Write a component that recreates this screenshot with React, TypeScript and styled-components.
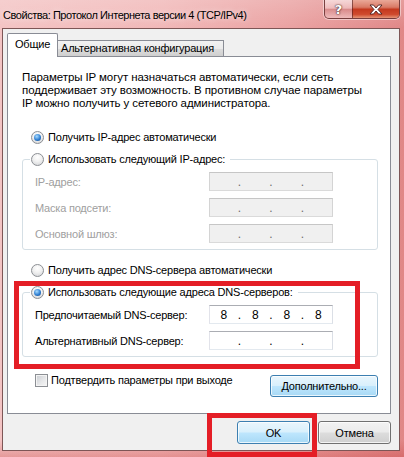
import React from "react";
import styled, { createGlobalStyle, css } from "styled-components";

const GlobalStyle = createGlobalStyle`
  html, body {
    margin: 0;
    padding: 0;
  }
  body {
    font-family: "Liberation Sans", Arial, sans-serif;
    font-size: 11px;
    letter-spacing: -0.2px;
    color: #000;
  }
`;

const Window = styled.div`
  position: relative;
  width: 404px;
  height: 457px;
  display: flex;
  flex-direction: column;
  overflow: hidden;
  background:
    linear-gradient(180deg, rgba(255, 255, 255, 0.18) 0px, rgba(255, 255, 255, 0) 28px, rgba(0, 0, 0, 0) 440px, rgba(190, 30, 30, 0.25) 457px),
    linear-gradient(90deg, #f3c4c4 0%, #f1b8b8 40%, #eaa2a2 72%, #e08787 100%);
`;

/* title bar */
const TitleBar = styled.div`
  flex: none;
  height: 28px;
  display: flex;
  justify-content: space-between;
  align-items: flex-start;
`;

const Title = styled.div`
  padding-left: 3px;
  line-height: 30px;
  font-size: 11px;
  letter-spacing: -0.45px;
  white-space: nowrap;
  text-shadow: 0 0 6px rgba(255, 255, 255, 0.8);
`;

const CaptionButtons = styled.div`
  display: flex;
  height: 18px;
  margin-right: 4px;
  border: 1px solid rgba(80, 30, 30, 0.75);
  border-top: none;
  border-radius: 0 0 5px 5px;
  overflow: hidden;
  box-shadow: 0 0 0 1px rgba(255, 255, 255, 0.45);
`;

const CaptionButton = styled.div<{ $close?: boolean }>`
  width: ${(p) => (p.$close ? 46 : 27)}px;
  display: flex;
  align-items: center;
  justify-content: center;
  color: #fff;
  font-family: "DejaVu Sans", sans-serif;
  font-weight: bold;
  font-size: 13px;
  letter-spacing: 0;
  text-shadow: 0 0 2px #3a1a1a, 0 0 1px #3a1a1a;
  background: ${(p) =>
    p.$close
      ? "linear-gradient(180deg, #eaa898 0%, #d97a66 40%, #c4391f 52%, #cf4a2e 80%, #e59477 100%)"
      : "linear-gradient(180deg, rgba(255,255,255,0.55) 0%, rgba(255,255,255,0.25) 45%, rgba(170,70,70,0.25) 52%, rgba(255,255,255,0.3) 100%)"};
  & + & {
    border-left: 1px solid rgba(80, 30, 30, 0.6);
  }
`;

/* client area */
const Client = styled.div`
  flex: 1;
  margin: 0 4px 6px 2px;
  padding: 4px 8px 0 4px;
  border: 1px solid #7d5656;
  background: #f0f0f0;
  display: flex;
  flex-direction: column;
`;

const TabStrip = styled.div`
  position: relative;
  z-index: 1;
  height: 24px;
  margin-bottom: -1px;
  display: flex;
  align-items: flex-end;
`;

const Tab = styled.div<{ $active?: boolean }>`
  box-sizing: border-box;
  border: 1px solid #898c95;
  border-bottom: none;
  white-space: nowrap;
  ${(p) =>
    p.$active
      ? css`
          width: 51px;
          height: 24px;
          padding-left: 7px;
          line-height: 20px;
          background: #fff;
          border-radius: 2px 2px 0 0;
        `
      : css`
          width: 166px;
          height: 16px;
          margin-bottom: 1px;
          padding-left: 3px;
          line-height: 15px;
          border-left: none;
          background: linear-gradient(180deg, #f2f2f2 0%, #ebebeb 50%, #dddddd 51%, #cfcfcf 100%);
        `}
`;

const Panel = styled.div`
  box-sizing: border-box;
  height: 358px;
  padding: 14px 12px 0 14px;
  border: 1px solid #898c95;
  background: #fff;
  display: flex;
  flex-direction: column;
`;

const Intro = styled.p`
  margin: 0;
  font-size: 11.5px;
  letter-spacing: -0.1px;
  line-height: 13px;
  white-space: nowrap;
`;

const Option = styled.label<{ $mt?: number }>`
  display: flex;
  align-items: center;
  gap: 4px;
  height: 16px;
  margin-top: ${(p) => p.$mt ?? 0}px;
  padding-left: 9px;
  white-space: nowrap;
`;

const Radio = styled.span<{ $checked?: boolean }>`
  flex: none;
  box-sizing: border-box;
  width: 13px;
  height: 13px;
  border-radius: 50%;
  border: 1px solid #8c8f94;
  background: radial-gradient(circle at 50% 30%, #ffffff 0%, #f1f1f1 45%, #cfd1d4 100%);
  display: flex;
  align-items: center;
  justify-content: center;
  &::after {
    content: "";
    display: ${(p) => (p.$checked ? "block" : "none")};
    width: 7px;
    height: 7px;
    border-radius: 50%;
    background: radial-gradient(circle at 40% 35%, #a8dcff 0%, #2f7fd2 55%, #123f7a 100%);
  }
`;

const Group = styled.div<{ $mt: number }>`
  margin-top: ${(p) => p.$mt}px;
  padding: 0 44px 6px 12px;
  border: 1px solid #d5dfe5;
  border-radius: 3px;
  display: flex;
  flex-direction: column;
  gap: 7px;
`;

const Legend = styled(Option)`
  align-self: flex-start;
  margin: -9px 0 -2px -5px;
  padding: 0 5px 0 1px;
  background: #fff;
`;

const Field = styled.div`
  height: 19px;
  display: flex;
  align-items: center;
  justify-content: space-between;
`;

const FieldLabel = styled.span<{ $disabled?: boolean }>`
  white-space: nowrap;
  color: ${(p) => (p.$disabled ? "#a0a0a0" : "#000")};
`;

const IpBox = styled.div<{ $disabled?: boolean }>`
  flex: none;
  box-sizing: border-box;
  width: 124px;
  height: 19px;
  display: flex;
  align-items: center;
  border: 1px solid;
  letter-spacing: 0;
  font-size: 12px;
  ${(p) =>
    p.$disabled
      ? css`
          border-color: #c6c6c6 #d4d4d4 #dadada #d4d4d4;
          background: #f0f0f0;
          color: #6d6d6d;
        `
      : css`
          border-color: #abadb3 #dbdfe6 #e3e9ef #e2e3ea;
          background: #fff;
          color: #000;
        `}
`;

const Octet = styled.span`
  flex: 1;
  text-align: center;
`;

const Dot = styled.span`
  width: 4px;
  text-align: center;
`;

const BottomRow = styled.div`
  margin-top: 15px;
  padding-left: 13px;
  display: flex;
  justify-content: space-between;
  align-items: flex-start;
`;

const Check = styled.label`
  height: 16px;
  display: flex;
  align-items: center;
  gap: 3px;
  white-space: nowrap;
`;

const Checkbox = styled.span`
  box-sizing: border-box;
  width: 13px;
  height: 13px;
  border: 1px solid #8c8f94;
  box-shadow: inset 0 0 0 1px #f4f4f4;
  background: linear-gradient(135deg, #c9ccd1 0%, #e6e7e9 55%, #f7f7f7 100%);
`;

const Button = styled.button<{ $blue?: boolean; $w: number; $h?: number; $mt?: number }>`
  box-sizing: border-box;
  width: ${(p) => p.$w}px;
  height: ${(p) => p.$h ?? 23}px;
  margin-top: ${(p) => p.$mt ?? 0}px;
  padding: 0;
  font: inherit;
  letter-spacing: inherit;
  color: #000;
  white-space: nowrap;
  border-radius: 3px;
  border: 1px solid ${(p) => (p.$blue ? "#3c7fb1" : "#707070")};
  box-shadow: inset 0 0 0 1px rgba(255, 255, 255, 0.75);
  background: ${(p) =>
    p.$blue
      ? "linear-gradient(180deg, #eaf6fd 0%, #d9f0fc 48%, #bee6fd 52%, #a7d9f5 100%)"
      : "linear-gradient(180deg, #f2f2f2 0%, #ebebeb 48%, #dddddd 52%, #cfcfcf 100%)"};
`;

const Footer = styled.div`
  margin-top: 7px;
  display: flex;
  justify-content: flex-end;
  gap: 8px;
`;

/* red annotation frames drawn over the screenshot */
const Highlight = styled.div<{ $x: number; $y: number; $w: number; $h: number }>`
  position: absolute;
  left: ${(p) => p.$x}px;
  top: ${(p) => p.$y}px;
  width: ${(p) => p.$w}px;
  height: ${(p) => p.$h}px;
  box-sizing: border-box;
  border: 5px solid #e41e26;
  pointer-events: none;
`;

const IpInput = ({ value, disabled }: { value?: string[]; disabled?: boolean }) => {
  const parts = value ?? ["", "", "", ""];
  return (
    <IpBox $disabled={disabled}>
      {parts.map((p, i) => (
        <React.Fragment key={i}>
          {i > 0 && <Dot>.</Dot>}
          <Octet>{p}</Octet>
        </React.Fragment>
      ))}
    </IpBox>
  );
};

const CloseGlyph = () => (
  <svg width="14" height="11" viewBox="0 0 14 11">
    <path
      d="M1 1h3.5L7 4l2.5-3H13L9 5.5 13 10H9.5L7 7l-2.5 3H1l4-4.5z"
      fill="#fff"
      stroke="#4a2020"
      strokeWidth="0.9"
      strokeLinejoin="round"
    />
  </svg>
);

const App = () => {
  return (
    <>
      <GlobalStyle />
      <Window>
        {/* title bar */}
        <TitleBar>
          <Title>Свойства: Протокол Интернета версии 4 (TCP/IPv4)</Title>
          <CaptionButtons>
            <CaptionButton>?</CaptionButton>
            <CaptionButton $close>
              <CloseGlyph />
            </CaptionButton>
          </CaptionButtons>
        </TitleBar>

        <Client>
          <TabStrip>
            <Tab $active>Общие</Tab>
            <Tab>Альтернативная конфигурация</Tab>
          </TabStrip>

          <Panel>
            <Intro>
              Параметры IP могут назначаться автоматически, если сеть
              <br />
              поддерживает эту возможность. В противном случае параметры
              <br />
              IP можно получить у сетевого администратора.
            </Intro>

            {/* ip address */}
            <Option $mt={19}>
              <Radio $checked />
              Получить IP-адрес автоматически
            </Option>
            <Group $mt={14}>
              <Legend>
                <Radio />
                Использовать следующий IP-адрес:
              </Legend>
              <Field>
                <FieldLabel $disabled>IP-адрес:</FieldLabel>
                <IpInput disabled />
              </Field>
              <Field>
                <FieldLabel $disabled>Маска подсети:</FieldLabel>
                <IpInput disabled />
              </Field>
              <Field>
                <FieldLabel $disabled>Основной шлюз:</FieldLabel>
                <IpInput disabled />
              </Field>
            </Group>

            {/* dns */}
            <Option $mt={12}>
              <Radio />
              Получить адрес DNS-сервера автоматически
            </Option>
            <Group $mt={14}>
              <Legend>
                <Radio $checked />
                Использовать следующие адреса DNS-серверов:
              </Legend>
              <Field>
                <FieldLabel>Предпочитаемый DNS-сервер:</FieldLabel>
                <IpInput value={["8", "8", "8", "8"]} />
              </Field>
              <Field>
                <FieldLabel>Альтернативный DNS-сервер:</FieldLabel>
                <IpInput />
              </Field>
            </Group>

            <BottomRow>
              <Check>
                <Checkbox />
                Подтвердить параметры при выходе
              </Check>
              <Button $blue $w={108} $h={22} $mt={3}>
                Дополнительно...
              </Button>
            </BottomRow>
          </Panel>

          <Footer>
            <Button $blue $w={73}>
              OK
            </Button>
            <Button $w={73}>Отмена</Button>
          </Footer>
        </Client>

        <Highlight $x={14} $y={281} $w={346} $h={88} />
        <Highlight $x={207} $y={413} $w={110} $h={44} />
      </Window>
    </>
  );
};

export default App;
